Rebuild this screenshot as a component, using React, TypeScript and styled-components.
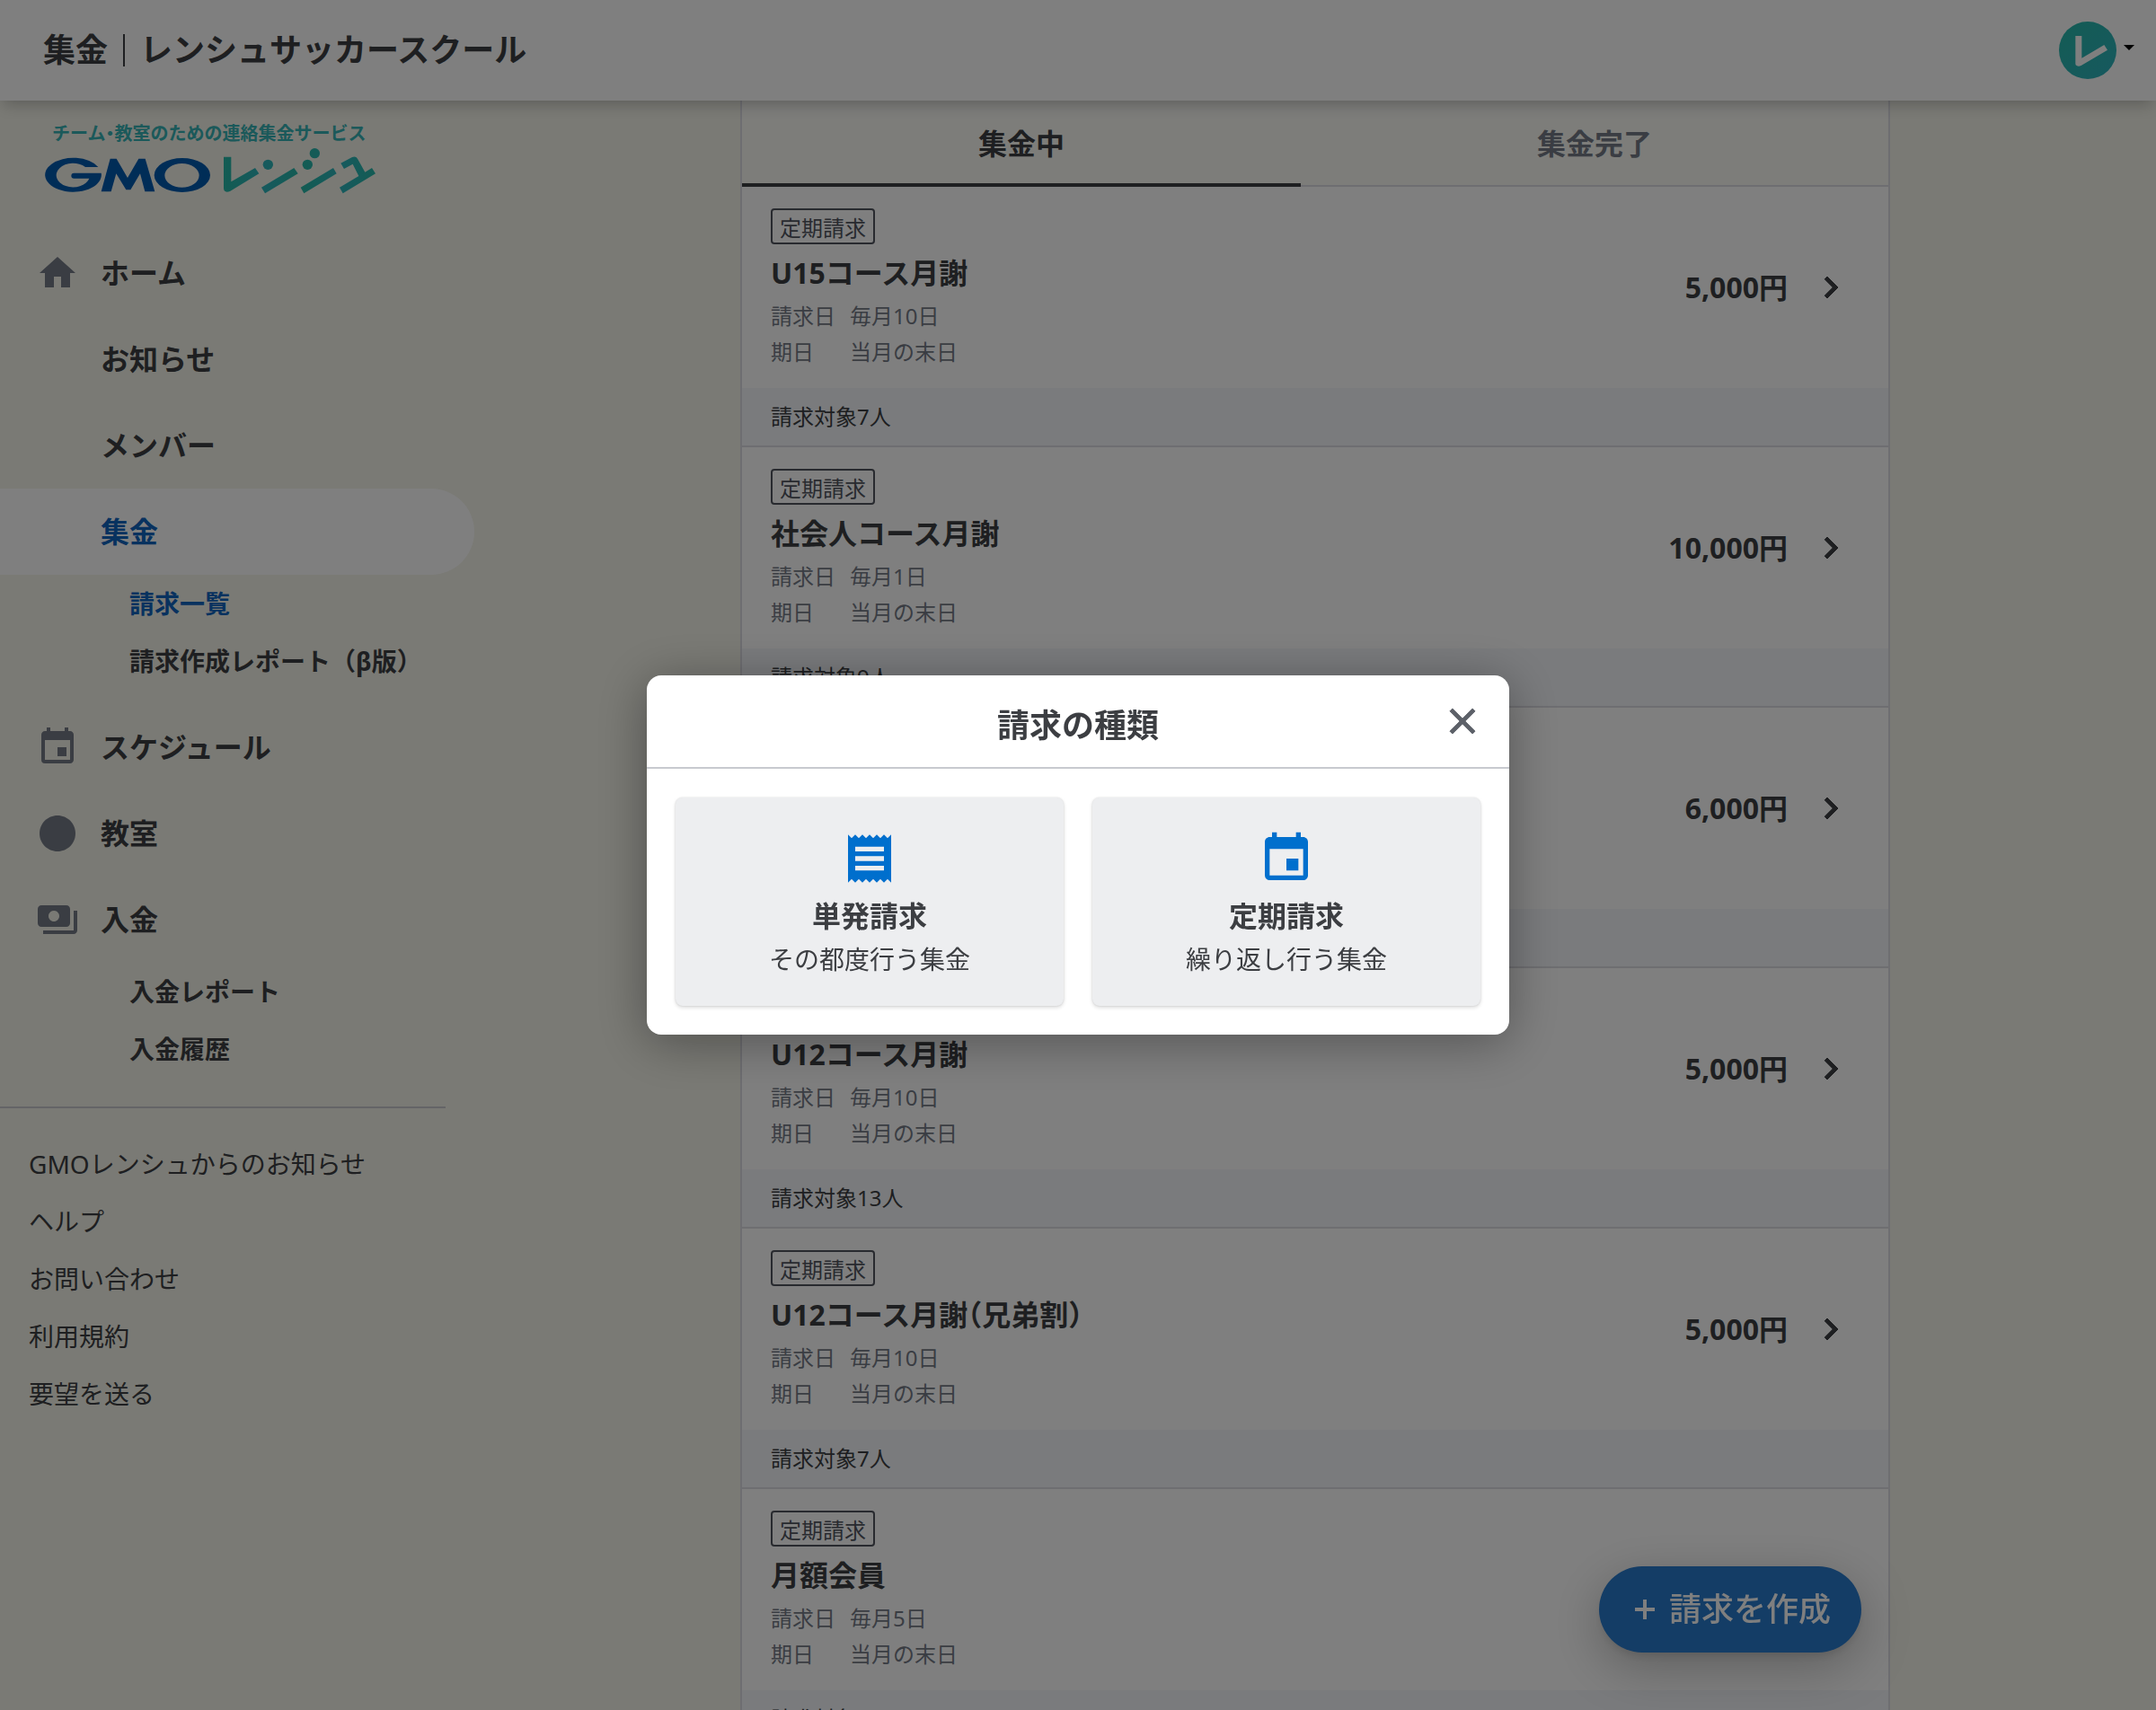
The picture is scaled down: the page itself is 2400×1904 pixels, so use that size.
import React from "react";
import styled, { createGlobalStyle, css } from "styled-components";
import {
  MdChevronRight,
  MdCircle,
  MdClose,
  MdEvent,
  MdHome,
  MdPayments,
  MdReceipt,
} from "react-icons/md";

const color = {
  text: "#3c3e42",
  muted: "#757b87",
  blue: "#1164bf",
  accent: "#006fcd",
  page: "#f4f4ea",
  line: "#dcdce2",
};

const GlobalStyle = createGlobalStyle`
  *, *::before, *::after { box-sizing: border-box; }
  body {
    margin: 0;
    background: ${color.page};
    color: ${color.text};
    font-family: "Noto Sans", "Noto Sans CJK JP", sans-serif;
    font-size: 24px;
    line-height: 40px;
  }
  h1, h2, h3, p, ul, dl, dd { margin: 0; padding: 0; }
  ul { list-style: none; }
  a { color: inherit; text-decoration: none; }
  button { border: 0; font: inherit; color: inherit; cursor: pointer; }
  svg { display: block; flex: none; }
`;

const Page = styled.div`
  display: flex;
  flex-direction: column;
  height: 100vh;
  overflow: hidden;
`;

const Header = styled.header`
  position: relative;
  z-index: 1;
  flex: none;
  display: flex;
  align-items: center;
  justify-content: space-between;
  height: 112px;
  padding: 0 24px 0 48px;
  background: #fff;
  box-shadow: 0 8px 16px -4px rgba(0, 0, 0, 0.24);
`;

const PageTitle = styled.h1`
  display: flex;
  align-items: center;
  font-size: 36px;
  font-weight: 700;
  line-height: 48px;
`;

const TitleDivider = styled.span`
  width: 2px;
  height: 36px;
  margin: 0 17px;
  background: currentColor;
`;

const AccountButton = styled.button`
  display: flex;
  align-items: center;
  gap: 8px;
  padding: 0;
  background: none;
`;

const Caret = styled.span`
  width: 12px;
  border: 6px solid transparent;
  border-top-color: #000;
  border-bottom: 0;
  margin-bottom: 6px;
`;

const Columns = styled.div`
  flex: 1;
  display: flex;
  min-height: 0;
`;

const Sidebar = styled.nav`
  flex: none;
  width: 528px;
  padding-top: 25px;
`;

const LogoLink = styled.a`
  display: flex;
  flex-direction: column;
  align-items: flex-start;
  gap: 3px;
  margin: 0 0 40px 50px;
`;

const Tagline = styled.span`
  padding-left: 8px;
  color: #36b2b4;
  font-size: 20px;
  font-weight: 700;
  line-height: 24px;
`;

const HalfWidth = styled.span`
  font-feature-settings: "halt";
`;

const NavLink = styled.a<{ $active?: boolean }>`
  display: flex;
  align-items: center;
  gap: 24px;
  height: 96px;
  padding-left: 40px;
  border-radius: 0 48px 48px 0;
  font-size: 32px;
  font-weight: 700;
  ${(p) =>
    p.$active &&
    css`
      background: #fff;
      color: ${color.blue};
    `}
`;

const IconSlot = styled.span`
  width: 48px;
  height: 48px;
  color: ${color.muted};
`;

const SubNav = styled.ul`
  padding-bottom: 16px;
`;

const SubLink = styled.a<{ $active?: boolean }>`
  display: flex;
  align-items: center;
  height: 64px;
  padding-left: 144px;
  color: ${(p) => (p.$active ? color.blue : "inherit")};
  font-size: 28px;
  font-weight: 700;
`;

const SideRule = styled.hr`
  width: 496px;
  height: 2px;
  margin: 16px 0 30px;
  border: 0;
  background: #c8c8cf;
`;

const PlainLink = styled.a`
  display: flex;
  align-items: center;
  height: 64px;
  padding-left: 32px;
  font-size: 28px;
`;

const Main = styled.main`
  flex: 1;
  display: flex;
  justify-content: center;
  min-width: 0;
`;

const Panel = styled.section`
  width: 100%;
  max-width: 1280px;
  height: max-content;
  border: solid ${color.line};
  border-width: 0 2px;
  background: #fff;
`;

const Tabs = styled.div`
  display: flex;
  background: #fafaf5;
`;

const Tab = styled.button<{ $active?: boolean }>`
  flex: 1 1 auto;
  height: 96px;
  padding: 0;
  background: none;
  box-shadow: inset 0 ${(p) => (p.$active ? "-4px" : "-2px")} 0
    ${(p) => (p.$active ? color.text : color.line)};
  color: ${(p) => (p.$active ? color.text : color.muted)};
  font-size: 32px;
  font-weight: 700;
`;

const BillItem = styled.li`
  border-bottom: 2px solid ${color.line};
`;

const BillBody = styled.a`
  display: flex;
  align-items: center;
  gap: 24px;
  height: 224px;
  padding: 0 40px 0 32px;
`;

const BillInfo = styled.div`
  flex: 1;
  display: flex;
  flex-direction: column;
  align-items: flex-start;
  padding-top: 4px;
`;

const Tag = styled.span`
  height: 40px;
  padding: 0 8px;
  border: 2px solid #50555e;
  border-radius: 4px;
  color: #50555e;
  line-height: 40px;
`;

const BillTitle = styled.h3`
  margin: 8px 0 4px;
  font-size: 32px;
  font-weight: 700;
  line-height: 48px;
  font-feature-settings: "halt";
`;

const BillDates = styled.dl`
  display: grid;
  grid-template-columns: 72px auto;
  column-gap: 16px;
  color: ${color.muted};
`;

const Price = styled.span`
  font-size: 32px;
  font-weight: 700;
`;

const BoldIcon = styled.span`
  display: block;

  svg {
    stroke: none;
  }

  path:last-child {
    stroke: currentColor;
    stroke-width: 0.5;
  }
`;

const BillFooter = styled.p`
  padding: 12px 32px;
  background: #f4f6fa;
`;

const CreateLayer = styled.div`
  position: fixed;
  right: 0;
  bottom: 64px;
  left: 528px;
  display: flex;
  justify-content: flex-end;
  max-width: 1280px;
  margin: 0 auto;
  padding-right: 32px;
`;

const CreateButton = styled.button`
  display: flex;
  align-items: center;
  gap: 16px;
  height: 96px;
  padding: 0 34px 0 40px;
  border-radius: 48px;
  background: #287acc;
  box-shadow: 0 6px 10px -2px rgba(0, 0, 0, 0.1), 0 16px 56px rgba(0, 0, 0, 0.26);
  color: #fff;
  font-size: 36px;
  font-weight: 500;
`;

const Overlay = styled.div`
  position: fixed;
  inset: 0;
  z-index: 2;
  display: flex;
  align-items: center;
  justify-content: center;
  background: rgba(0, 0, 0, 0.5);
`;

const Dialog = styled.div`
  width: 960px;
  border-radius: 16px;
  background: #fff;
  box-shadow: 0 8px 56px rgba(0, 0, 0, 0.35);
`;

const DialogHeader = styled.div`
  display: grid;
  grid-template-columns: 48px 1fr 48px;
  align-items: center;
  height: 104px;
  padding: 0 28px;
  border-bottom: 2px solid #c8cacf;
`;

const DialogTitle = styled.h2`
  grid-column: 2;
  padding-top: 10px;
  font-size: 36px;
  font-weight: 700;
  line-height: 48px;
  text-align: center;
`;

const CloseButton = styled.button`
  padding: 0;
  background: none;
  color: #5c6068;
`;

const Choices = styled.div`
  display: grid;
  grid-template-columns: 1fr 1fr;
  gap: 32px;
  padding: 32px;
`;

const Choice = styled.button`
  display: flex;
  flex-direction: column;
  align-items: center;
  padding: 36px 0 28px;
  border-radius: 8px;
  background: #edeef0;
  box-shadow: 0 0 2px rgba(0, 0, 0, 0.12), 0 2px 4px rgba(0, 0, 0, 0.14);
  font-size: 28px;
  line-height: 48px;

  svg {
    margin-bottom: 8px;
    color: ${color.accent};
  }

  strong {
    font-size: 32px;
    font-weight: 700;
  }
`;

const Avatar = () => (
  <svg width="64" height="64" viewBox="0 0 192 192" aria-hidden="true">
    <defs>
      <linearGradient id="avatarFill" x1="0" y1="0" x2="1" y2="1">
        <stop offset="0" stopColor="#28b8a9" />
        <stop offset="1" stopColor="#2eb2be" />
      </linearGradient>
    </defs>
    <circle cx="96" cy="96" r="96" fill="url(#avatarFill)" />
    <path d="M55 48h21v74l75-44 11 17-88 52q-8 4-14 1t-5-8z" fill="#fff" />
  </svg>
);

const Logo = () => (
  <svg width="369" height="52" viewBox="30 102 1107 156" role="img" aria-label="GMOレンシュ">
    <defs>
      <linearGradient id="logoFill" gradientUnits="userSpaceOnUse" x1="627" y1="0" x2="757" y2="0" spreadMethod="reflect">
        <stop offset="0" stopColor="#26b8a6" />
        <stop offset="1" stopColor="#2eb4bc" />
      </linearGradient>
    </defs>
    <g fill="#005aaf">
      <path d="M208 168A94 57 0 1 0 218 188H127q-9 0-9 9t9 9H178A56 40 0 1 1 165 168Z" />
      <path d="M218 250L248 140H269L306 204L343 140H365L397 250H364L348 190L316 244H301L268 190L251 250Z" />
      <path
        fillRule="evenodd"
        d="M395 195a93.500 57 0 1 0 187 0a93.500 57 0 1 0-187 0ZM430 196a57.500 40 0 1 1 115 0a57.500 40 0 1 1-115 0Z"
      />
    </g>
    <g fill="url(#logoFill)">
      <path d="M627 134H652V217L732 171L745 190L648 249Q627 256 627 238Z" />
      <circle cx="775" cy="160" r="17" />
      <path d="M753 236L862 171L875 190L765 256Z" />
      <circle cx="907" cy="160" r="17" />
      <circle cx="931" cy="122" r="17" />
      <path d="M884 236L993 171L1004 190L895 256Z" />
      <path d="M1018 155L1056 135Q1068 130 1074 140L1099 185L1122 171L1134 190L1025 256L1014 236L1078 198L1058 158L1029 174Z" />
    </g>
  </svg>
);

const PlusIcon = () => (
  <svg width="22" height="22" viewBox="0 0 22 22" aria-hidden="true">
    <path d="M11 0v22M0 11h22" stroke="currentColor" strokeWidth="4" />
  </svg>
);

const bills = [
  { title: "U15コース月謝", day: "毎月10日", price: "5,000円", count: 7 },
  { title: "社会人コース月謝", day: "毎月1日", price: "10,000円", count: 9 },
  { title: "U18コース月謝", day: "毎月10日", price: "6,000円", count: 8 },
  { title: "U12コース月謝", day: "毎月10日", price: "5,000円", count: 13 },
  { title: "U12コース月謝（兄弟割）", day: "毎月10日", price: "5,000円", count: 7 },
  { title: "月額会員", day: "毎月5日", price: "5,000円", count: 10 },
];

const links = ["GMOレンシュからのお知らせ", "ヘルプ", "お問い合わせ", "利用規約", "要望を送る"];

type NavItemProps = {
  label: string;
  icon?: React.ReactNode;
  active?: boolean;
  children?: React.ReactNode;
};

const NavItem = ({ label, icon, active, children }: NavItemProps) => (
  <li>
    <NavLink href="#" $active={active} aria-current={active ? "page" : undefined}>
      <IconSlot>{icon}</IconSlot>
      {label}
    </NavLink>
    {children && <SubNav>{children}</SubNav>}
  </li>
);

export default function App() {
  return (
    <Page>
      <GlobalStyle />
      <Header>
        <PageTitle>
          集金
          <TitleDivider />
          レンシュサッカースクール
        </PageTitle>
        <AccountButton type="button" aria-label="アカウント">
          <Avatar />
          <Caret />
        </AccountButton>
      </Header>

      <Columns>
        <Sidebar>
          <LogoLink href="#">
            <Tagline>
              チーム<HalfWidth>・</HalfWidth>教室のための連絡集金サービス
            </Tagline>
            <Logo />
          </LogoLink>
          <ul>
            <NavItem label="ホーム" icon={<MdHome size={48} />} />
            <NavItem label="お知らせ" />
            <NavItem label="メンバー" />
            <NavItem label="集金" active>
              <li><SubLink href="#" $active>請求一覧</SubLink></li>
              <li><SubLink href="#">請求作成レポート（β版）</SubLink></li>
            </NavItem>
            <NavItem label="スケジュール" icon={<MdEvent size={48} />} />
            <NavItem label="教室" icon={<MdCircle size={48} />} />
            <NavItem label="入金" icon={<MdPayments size={48} />}>
              <li><SubLink href="#">入金レポート</SubLink></li>
              <li><SubLink href="#">入金履歴</SubLink></li>
            </NavItem>
          </ul>
          <SideRule />
          <ul>
            {links.map((label) => (
              <li key={label}><PlainLink href="#">{label}</PlainLink></li>
            ))}
          </ul>
        </Sidebar>

        <Main>
          <Panel>
            <Tabs role="tablist">
              <Tab type="button" role="tab" aria-selected="true" $active>集金中</Tab>
              <Tab type="button" role="tab" aria-selected="false">集金完了</Tab>
            </Tabs>
            <ul>
              {bills.map((bill) => (
                <BillItem key={bill.title}>
                  <BillBody href="#">
                    <BillInfo>
                      <Tag>定期請求</Tag>
                      <BillTitle>{bill.title}</BillTitle>
                      <BillDates>
                        <dt>請求日</dt>
                        <dd>{bill.day}</dd>
                        <dt>期日</dt>
                        <dd>当月の末日</dd>
                      </BillDates>
                    </BillInfo>
                    <Price>{bill.price}</Price>
                    <BoldIcon>
                      <MdChevronRight size={48} />
                    </BoldIcon>
                  </BillBody>
                  <BillFooter>請求対象{bill.count}人</BillFooter>
                </BillItem>
              ))}
            </ul>
          </Panel>
        </Main>
      </Columns>

      <CreateLayer>
        <CreateButton type="button">
          <PlusIcon />
          請求を作成
        </CreateButton>
      </CreateLayer>

      <Overlay>
        <Dialog role="dialog" aria-modal="true" aria-labelledby="dialog-title">
          <DialogHeader>
            <DialogTitle id="dialog-title">請求の種類</DialogTitle>
            <CloseButton type="button" aria-label="閉じる">
              <BoldIcon>
                <MdClose size={48} />
              </BoldIcon>
            </CloseButton>
          </DialogHeader>
          <Choices>
            <Choice type="button">
              <MdReceipt size={64} />
              <strong>単発請求</strong>
              <span>その都度行う集金</span>
            </Choice>
            <Choice type="button">
              <MdEvent size={64} />
              <strong>定期請求</strong>
              <span>繰り返し行う集金</span>
            </Choice>
          </Choices>
        </Dialog>
      </Overlay>
    </Page>
  );
}
